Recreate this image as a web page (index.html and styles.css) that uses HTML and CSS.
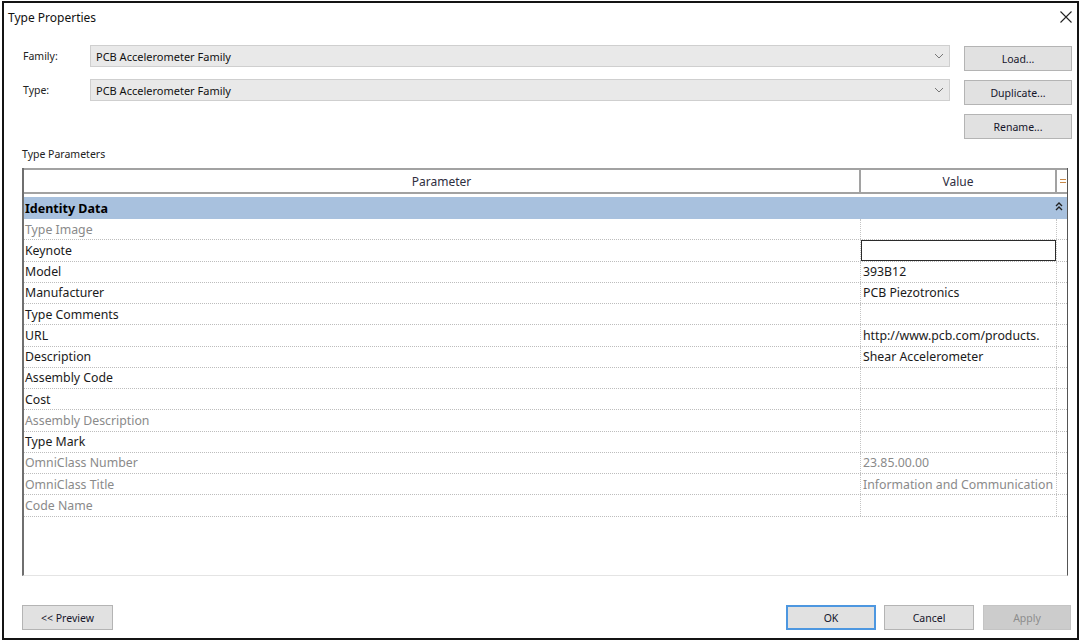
FILE: index.html
```html
<!DOCTYPE html>
<html lang="en">
<head>
    <meta charset="UTF-8">
    <meta name="viewport" content="width=device-width, initial-scale=1.0">
    <title>Type Properties</title>
    <link rel="stylesheet" href="styles.css">
</head>
<body>
    <div class="dialog">
        <div class="titlebar">
            <span class="title">Type Properties</span>
            <svg class="close" width="12" height="12" viewBox="0 0 12 12">
                <path d="M0.5 0.5 L11.5 11.5 M11.5 0.5 L0.5 11.5" stroke="#222" stroke-width="1.1" fill="none"/>
            </svg>
        </div>

        <div class="selectors">
            <div class="field-label">Family:</div>
            <div class="combo">
                <span>PCB Accelerometer Family</span>
                <svg width="10" height="6" viewBox="0 0 10 6"><path d="M1 1 L5 5 L9 1" stroke="#777" stroke-width="1" fill="none"/></svg>
            </div>
            <button class="btn">Load...</button>

            <div class="field-label">Type:</div>
            <div class="combo">
                <span>PCB Accelerometer Family</span>
                <svg width="10" height="6" viewBox="0 0 10 6"><path d="M1 1 L5 5 L9 1" stroke="#777" stroke-width="1" fill="none"/></svg>
            </div>
            <button class="btn">Duplicate...</button>

            <div></div>
            <div></div>
            <button class="btn">Rename...</button>
        </div>

        <div class="section-label">Type Parameters</div>

        <div class="grid">
            <div class="grid-head">
                <div class="hcell">Parameter</div>
                <div class="hcell">Value</div>
                <div class="hcell hcell-eq">
                    <svg width="6" height="6" viewBox="0 0 6 6"><path d="M0 1.5 H6 M0 4.5 H6" stroke="#c98a4a" stroke-width="1"/></svg>
                </div>
            </div>

            <div class="group">
                <span>Identity Data</span>
                <svg class="collapse" width="8" height="9" viewBox="0 0 8 9"><path d="M1 4 L4 1 L7 4 M1 8 L4 5 L7 8" stroke="#222" stroke-width="1.4" fill="none"/></svg>
            </div>

            <div class="row"><div class="pcell muted">Type Image</div><div class="vcell"></div><div class="ecell"></div></div>
            <div class="row"><div class="pcell">Keynote</div><div class="vcell"><div class="editbox"></div></div><div class="ecell"></div></div>
            <div class="row"><div class="pcell">Model</div><div class="vcell">393B12</div><div class="ecell"></div></div>
            <div class="row"><div class="pcell">Manufacturer</div><div class="vcell">PCB Piezotronics</div><div class="ecell"></div></div>
            <div class="row"><div class="pcell">Type Comments</div><div class="vcell"></div><div class="ecell"></div></div>
            <div class="row"><div class="pcell">URL</div><div class="vcell">http://www.pcb.com/products.</div><div class="ecell"></div></div>
            <div class="row"><div class="pcell">Description</div><div class="vcell">Shear Accelerometer</div><div class="ecell"></div></div>
            <div class="row"><div class="pcell">Assembly Code</div><div class="vcell"></div><div class="ecell"></div></div>
            <div class="row"><div class="pcell">Cost</div><div class="vcell"></div><div class="ecell"></div></div>
            <div class="row"><div class="pcell muted">Assembly Description</div><div class="vcell"></div><div class="ecell"></div></div>
            <div class="row"><div class="pcell">Type Mark</div><div class="vcell"></div><div class="ecell"></div></div>
            <div class="row"><div class="pcell muted">OmniClass Number</div><div class="vcell muted">23.85.00.00</div><div class="ecell"></div></div>
            <div class="row"><div class="pcell muted">OmniClass Title</div><div class="vcell muted">Information and Communication</div><div class="ecell"></div></div>
            <div class="row"><div class="pcell muted">Code Name</div><div class="vcell"></div><div class="ecell"></div></div>
        </div>

        <div class="footer">
            <button class="btn btn-preview">&lt;&lt; Preview</button>
            <div class="spacer"></div>
            <button class="btn btn-ok">OK</button>
            <button class="btn">Cancel</button>
            <button class="btn btn-disabled">Apply</button>
        </div>
    </div>
</body>
</html>
```

FILE: styles.css
```css
* {
    box-sizing: border-box;
}

body, html {
    margin: 0;
    padding: 0;
    background: #fff;
}

body {
    font-family: "Noto Sans", "Open Sans", sans-serif;
    color: #1a1a1a;
}

.dialog {
    margin: 1px 0 0 2px;
    width: 1077px;
    height: 639px;
    border: 2px solid #141414;
    background: #fff;
    display: flex;
    flex-direction: column;
}

/* title bar */
.titlebar {
    height: 28px;
    display: flex;
    align-items: center;
    justify-content: space-between;
    padding: 0 5px 0 4px;
}

.title {
    font-size: 12px;
    color: #111;
}

/* family / type pickers */
.selectors {
    display: grid;
    grid-template-columns: 54px 860px 108px;
    grid-template-rows: 25px 25px 25px;
    column-gap: 14px;
    row-gap: 9px;
    padding: 15px 0 0 18px;
}

.field-label {
    font-size: 10.5px;
    color: #222;
    align-self: start;
    height: 22px;
    line-height: 22px;
    margin-top: -1px;
    padding-left: 1px;
}

.combo {
    height: 22px;
    margin-top: -1px;
    background: #e9e9e9;
    border: 1px solid #cfcfcf;
    display: flex;
    align-items: center;
    justify-content: space-between;
    padding: 0 5px 0 5px;
    font-size: 11px;
    color: #111;
}

.btn {
    height: 25px;
    background: #e1e1e1;
    border: 1px solid #b4b4b4;
    font-family: "Noto Sans", "Open Sans", sans-serif;
    font-size: 10.5px;
    color: #15152b;
    padding: 0;
    cursor: default;
}

.section-label {
    font-size: 10.5px;
    color: #222;
    height: 14px;
    line-height: 14px;
    margin: 8px 0 7px 18px;
}

/* parameter table */
.grid {
    margin-left: 18px;
    width: 1046px;
    height: 408px;
    border-left: 2px solid #6f6f6f;
    border-right: 1px solid #555;
    border-bottom: 1px solid #e4e4e4;
}

.grid-head {
    display: grid;
    grid-template-columns: 837px 196px 11px;
    height: 26px;
    border-top: 2px solid #a2a2a2;
    border-bottom: 2px solid #a2a2a2;
}

.hcell {
    display: flex;
    align-items: center;
    justify-content: center;
    font-size: 12px;
    color: #2e2e40;
    border-right: 2px solid #a2a2a2;
}

.hcell-eq {
    border-right: none;
}

.group {
    margin-top: 3px;
    height: 22px;
    background: #a8c1de;
    display: flex;
    align-items: center;
    justify-content: space-between;
    padding: 0 4px 0 1px;
    font-size: 12.5px;
    font-weight: bold;
    color: #000;
}

.collapse {
    margin-top: -4px;
}

.row {
    display: grid;
    grid-template-columns: 837px 196px 11px;
    height: 21.25px;
    border-bottom: 1px dotted #bdbdbd;
    font-size: 12.3px;
}

.pcell, .vcell {
    display: flex;
    align-items: center;
    padding-left: 1px;
    white-space: nowrap;
    overflow: hidden;
}

.pcell {
    border-right: 1px dotted #c4c4c4;
}

.vcell {
    padding-left: 2px;
    border-right: 1px dotted #c4c4c4;
}

.muted {
    color: #8a8a8a;
}

.editbox {
    width: 196px;
    height: 21px;
    margin: 0 0 0 -2px;
    border: 1.5px solid #2b2b2b;
    background: #fff;
}

/* bottom buttons */
.footer {
    display: flex;
    padding: 29px 6px 0 18px;
    gap: 8px;
}

.spacer {
    flex: 1;
}

.footer .btn {
    width: 90px;
}

.footer .btn-preview {
    width: 91px;
}

.btn-ok {
    border: 2px solid #4d97e0;
}

.footer .btn-disabled {
    width: 88px;
    margin-left: 1px;
    background: #cccccc;
    border-color: #c4c4c4;
    color: #8d8d8d;
}
```
